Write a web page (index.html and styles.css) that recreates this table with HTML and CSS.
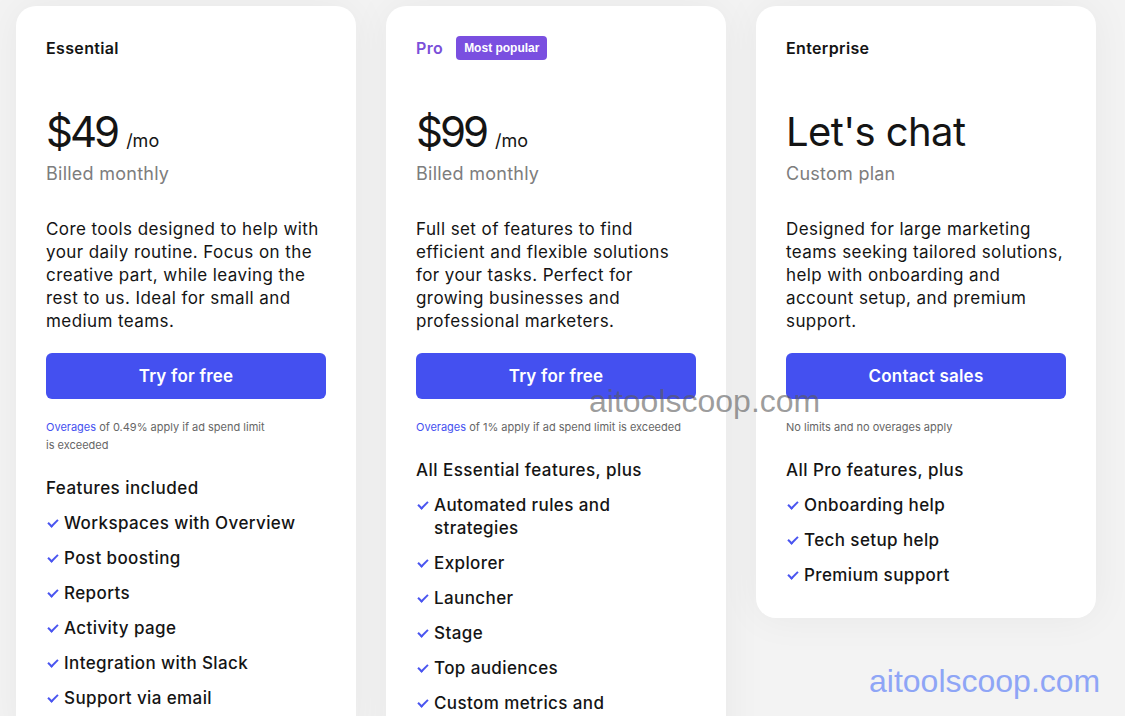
FILE: index.html
```html
<!DOCTYPE html>
<html lang="en">
<head>
<meta charset="utf-8">
<title>Pricing</title>
<link rel="stylesheet" href="styles.css">
</head>
<body>
<main class="plans">
  <section class="card">
    <div class="title-row"><h2 class="plan-name">Essential</h2></div>
    <div class="price"><span class="amount">$49</span><span class="per">/mo</span></div>
    <p class="billing">Billed monthly</p>
    <p class="desc">Core tools designed to help with your daily routine. Focus on the creative part, while leaving the rest to us. Ideal for small and medium teams.</p>
    <a class="btn" href="#">Try for free</a>
    <p class="note"><a href="#">Overages</a> of 0.49% apply if ad spend limit<br>is exceeded</p>
    <h3 class="feat-head">Features included</h3>
    <ul class="features">
      <li>Workspaces with Overview</li>
      <li>Post boosting</li>
      <li>Reports</li>
      <li>Activity page</li>
      <li>Integration with Slack</li>
      <li>Support via email</li>
    </ul>
  </section>
  <section class="card">
    <div class="title-row"><h2 class="plan-name pro">Pro</h2><span class="badge">Most popular</span></div>
    <div class="price"><span class="amount">$99</span><span class="per">/mo</span></div>
    <p class="billing">Billed monthly</p>
    <p class="desc">Full set of features to find efficient and flexible solutions for your tasks. Perfect for growing businesses and professional marketers.</p>
    <a class="btn" href="#">Try for free</a>
    <p class="note"><a href="#">Overages</a> of 1% apply if ad spend limit is exceeded</p>
    <h3 class="feat-head">All Essential features, plus</h3>
    <ul class="features">
      <li>Automated rules and strategies</li>
      <li>Explorer</li>
      <li>Launcher</li>
      <li>Stage</li>
      <li>Top audiences</li>
      <li>Custom metrics and<br>reports</li>
    </ul>
  </section>
  <section class="card">
    <div class="title-row"><h2 class="plan-name">Enterprise</h2></div>
    <div class="price"><span class="amount chat">Let's chat</span></div>
    <p class="billing">Custom plan</p>
    <p class="desc">Designed for large marketing teams seeking tailored solutions, help with onboarding and account setup, and premium support.</p>
    <a class="btn" href="#">Contact sales</a>
    <p class="note">No limits and no overages apply</p>
    <h3 class="feat-head">All Pro features, plus</h3>
    <ul class="features">
      <li>Onboarding help</li>
      <li>Tech setup help</li>
      <li>Premium support</li>
    </ul>
  </section>
</main>
<div class="wm wm-grey">aitoolscoop.com</div>
<div class="wm wm-blue">aitoolscoop.com</div>
</body>
</html>
```
FILE: styles.css
```css
* { box-sizing: border-box; }
html, body { margin: 0; padding: 0; }
body {
  width: 1125px;
  height: 716px;
  overflow: hidden;
  background: #f3f3f3;
  font-family: Inter, "Noto Sans", sans-serif;
  color: #141414;
  position: relative;
}
.plans {
  display: flex;
  align-items: flex-start;
  gap: 30px;
  padding: 6px 0 0 16px;
}
.card {
  flex: 0 0 340px;
  background: #fff;
  border-radius: 20px;
  padding: 30px 30px 31px;
  box-shadow: 0 0 40px rgba(0, 0, 0, 0.05);
}
.title-row {
  display: flex;
  align-items: center;
  gap: 13px;
  height: 24px;
}
.plan-name {
  margin: 0;
  font-size: 16px;
  font-weight: 600;
  letter-spacing: 0.35px;
}
.plan-name.pro { color: #7b4fd9; }
.badge {
  background: #7a4fe0;
  color: #fff;
  font-family: "Liberation Sans", Arial, sans-serif;
  font-weight: 700;
  font-size: 12px;
  height: 24px;
  line-height: 24px;
  padding: 0 8px;
  border-radius: 4px;
}
.price {
  margin-top: 48px;
  display: flex;
  align-items: baseline;
  height: 48px;
}
.amount {
  font-size: 42px;
  line-height: 48px;
  font-weight: 400;
  letter-spacing: -3px;
}
.amount.chat { font-size: 40px; letter-spacing: -0.6px; }
.per {
  font-size: 18px;
  margin-left: 9px;
}
.billing {
  margin: 6px 0 0;
  font-size: 18px;
  line-height: 24px;
  letter-spacing: 0.25px;
  color: #7d7d7d;
}
.desc {
  margin: 32px 0 0;
  font-size: 17px;
  line-height: 23px;
  letter-spacing: 0.42px;
}
.btn {
  display: flex;
  align-items: center;
  justify-content: center;
  margin-top: 20px;
  height: 46px;
  border-radius: 6px;
  background: #4450f0;
  color: #fff;
  font-size: 17px;
  font-weight: 600;
  letter-spacing: 0.2px;
  text-decoration: none;
}
.note {
  margin: 19px 0 0;
  font-size: 11px;
  line-height: 18px;
  color: #666;
}
.note a { color: #4450f0; text-decoration: none; }
.feat-head {
  margin: 23px 0 0;
  font-size: 17px;
  line-height: 23px;
  font-weight: 500;
  letter-spacing: 0.45px;
}
.features {
  list-style: none;
  margin: 12px 0 0;
  padding: 0;
  display: flex;
  flex-direction: column;
  gap: 12px;
}
.features li {
  position: relative;
  padding-left: 18px;
  font-size: 17px;
  line-height: 23px;
  font-weight: 500;
  letter-spacing: 0.4px;
}
.features li::before {
  content: "";
  position: absolute;
  left: 2px;
  top: 7px;
  width: 8px;
  height: 4px;
  border-left: 2px solid #4a55f0;
  border-bottom: 2px solid #4a55f0;
  transform: rotate(-45deg);
}
.wm {
  position: absolute;
  font-family: "Liberation Sans", Arial, sans-serif;
  font-size: 32px;
  line-height: 1;
  white-space: nowrap;
  pointer-events: none;
}
.wm-grey { left: 589px; top: 385px; color: rgba(90, 90, 90, 0.6); }
.wm-blue { left: 869px; top: 665px; color: #8ea5f6; }
```
